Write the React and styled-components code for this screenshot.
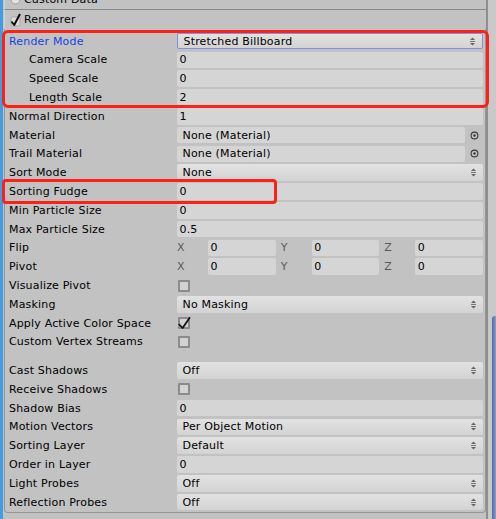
import React from 'react';
import styled, { createGlobalStyle } from 'styled-components';

const Global = createGlobalStyle`
  html, body { margin: 0; padding: 0; background: #c2c2c2; }
  body {
    font-family: "DejaVu Sans", Verdana, sans-serif;
    font-size: 11px;
    letter-spacing: 0.18px;
    color: #000;
    overflow: hidden;
  }
`;

const Page = styled.div`
  position: relative;
  width: 496px;
  height: 519px;
  display: flex;
  overflow: hidden;
  background: #c2c2c2;
`;

const EdgeStrip = styled.div`
  flex: none;
  width: 3px;
  background: #3f9de6;
`;

const Inspector = styled.div`
  flex: none;
  width: 483px;
  display: flex;
  flex-direction: column;
`;

const ScrollTrack = styled.div`
  flex: 1;
  display: flex;
  flex-direction: column;
  border-left: 2px solid #8e8e8e;
  background: #c9c9c9;
  padding: 316px 0 0 4px;
`;

const ScrollThumb = styled.div`
  flex: 1;
  background: linear-gradient(90deg, #4f68a3, #8e9dc6);
  border-radius: 3px 0 0 0;
`;

const Header = styled.div`
  box-sizing: border-box;
  flex: none;
  height: ${p => p.$h}px;
  margin: ${p => p.$mt}px 0 0 1px;
  padding-left: 5px;
  display: flex;
  align-items: center;
  gap: 3px;
  border-bottom: ${p => (p.$line ? '1px solid #8a8a8a' : 'none')};
  border-left: 1px solid #d4d4d4;
`;

const HeaderTitle = styled.span`
  line-height: 13px;
  white-space: nowrap;
`;

const Body = styled.div`
  flex: none;
  margin-left: 1px;
  padding-top: 2.8px;
  border: 1px solid #969696;
  border-top: none;
  border-radius: 0 0 4px 4px;
  display: flex;
  flex-direction: column;
`;

const Row = styled.div`
  box-sizing: border-box;
  height: 18.8px;
  display: flex;
  align-items: center;
  padding-right: 2px;
`;

const Spacer = styled.div`
  height: 9.8px;
`;

const Label = styled.div`
  flex: none;
  box-sizing: border-box;
  width: 172px;
  padding-left: ${p => (p.$indent ? 24 : 4)}px;
  color: ${p => (p.$active ? '#1742e2' : '#000')};
  white-space: nowrap;
  line-height: 13px;
`;

const Control = styled.div`
  flex: 1;
  min-width: 0;
  height: 16.6px;
  display: flex;
  align-items: center;
`;

const NumberField = styled.div`
  box-sizing: border-box;
  flex: 1;
  height: 16.6px;
  display: flex;
  align-items: center;
  padding-left: 2.5px;
  background: #d5d5d5;
  border-radius: 2px;
  line-height: 13px;
`;

const Dropdown = styled.div`
  box-sizing: border-box;
  flex: 1;
  height: 16.6px;
  display: flex;
  align-items: center;
  justify-content: space-between;
  padding: 0 6px 0 5.5px;
  background: linear-gradient(#e2e2e2, #d3d3d3);
  border: ${p => (p.$focus ? '1px solid #7d92e0' : 'none')};
  border-radius: 2px;
  line-height: 13px;
`;

const ObjectField = styled.div`
  box-sizing: border-box;
  flex: 1;
  height: 16.6px;
  display: flex;
  align-items: center;
  padding-left: 5.5px;
  background: #d5d5d5;
  border-radius: 2px;
  line-height: 13px;
`;

const PickerSlot = styled.div`
  flex: none;
  width: 17px;
  display: flex;
  justify-content: center;
  padding-left: 1px;
`;

const VectorGroup = styled.div`
  flex: 1;
  display: flex;
  align-items: center;
  gap: 5px;
`;

const Axis = styled.div`
  display: flex;
  flex: 1;
  align-items: center;
`;

const AxisLabel = styled.span`
  flex: none;
  width: 31px;
  color: #5a5a5a;
  line-height: 13px;
`;

const CheckBox = styled.div`
  position: relative;
  box-sizing: border-box;
  width: 12px;
  height: 12px;
  margin-left: 1px;
  border: 2px solid #8b8b8b;
  background: #d3d3d3;
  border-radius: 1px;
`;

const CheckMark = styled.svg`
  position: absolute;
  left: -2px;
  top: -3px;
`;

const Annotation = styled.div`
  position: absolute;
  box-sizing: border-box;
  left: ${p => p.$x}px;
  top: ${p => p.$y}px;
  width: ${p => p.$w}px;
  height: ${p => p.$h}px;
  border: 3px solid #ff2118;
  border-radius: ${p => p.$r}px;
  pointer-events: none;
`;

const Arrows = () => (
  <svg width="7" height="9" viewBox="0 0 7 9">
    <polygon points="1,3 3.5,0.5 6,3" fill="#666" />
    <rect x="1" y="4" width="5" height="1" fill="#777" />
    <polygon points="1,6 6,6 3.5,8.5" fill="#666" />
  </svg>
);

const Picker = () => (
  <svg width="9" height="9" viewBox="0 0 9 9">
    <circle cx="4.5" cy="4.5" r="3.4" fill="none" stroke="#3a3a3a" strokeWidth="1.1" />
    <circle cx="4.5" cy="4.5" r="1.2" fill="#3a3a3a" />
  </svg>
);

const Check = () => (
  <CheckMark width="13" height="14" viewBox="0 0 13 14">
    <path d="M0.8 8 L4.6 12 L12 1.2" fill="none" stroke="#111" strokeWidth="1.8" strokeLinejoin="round" />
  </CheckMark>
);

const HeaderToggle = () => (
  <svg width="11" height="14" viewBox="0 0 11 14" style={{ flex: 'none' }}>
    <rect x="1" y="4" width="9" height="9" rx="1.5" fill="#dcdcdc" stroke="#a5a5a5" />
    <path d="M1.5 8.5 L4.2 12 L10 1" fill="none" stroke="#0d0d0d" strokeWidth="2" strokeLinejoin="round" />
  </svg>
);

const HeaderRadio = () => (
  <svg width="11" height="11" viewBox="0 0 11 11" style={{ flex: 'none' }}>
    <circle cx="5.5" cy="5.5" r="4.5" fill="#e2e2e2" stroke="#a0a0a0" />
  </svg>
);

const rows = [
  { label: 'Render Mode', kind: 'drop', value: 'Stretched Billboard', active: true, focus: true },
  { label: 'Camera Scale', kind: 'num', value: '0', indent: true },
  { label: 'Speed Scale', kind: 'num', value: '0', indent: true },
  { label: 'Length Scale', kind: 'num', value: '2', indent: true },
  { label: 'Normal Direction', kind: 'num', value: '1' },
  { label: 'Material', kind: 'obj', value: 'None (Material)' },
  { label: 'Trail Material', kind: 'obj', value: 'None (Material)' },
  { label: 'Sort Mode', kind: 'drop', value: 'None' },
  { label: 'Sorting Fudge', kind: 'num', value: '0' },
  { label: 'Min Particle Size', kind: 'num', value: '0' },
  { label: 'Max Particle Size', kind: 'num', value: '0.5' },
  { label: 'Flip', kind: 'vec' },
  { label: 'Pivot', kind: 'vec' },
  { label: 'Visualize Pivot', kind: 'check' },
  { label: 'Masking', kind: 'drop', value: 'No Masking' },
  { label: 'Apply Active Color Space', kind: 'check', checked: true },
  { label: 'Custom Vertex Streams', kind: 'check' },
  { spacer: true },
  { label: 'Cast Shadows', kind: 'drop', value: 'Off' },
  { label: 'Receive Shadows', kind: 'check' },
  { label: 'Shadow Bias', kind: 'num', value: '0' },
  { label: 'Motion Vectors', kind: 'drop', value: 'Per Object Motion' },
  { label: 'Sorting Layer', kind: 'drop', value: 'Default' },
  { label: 'Order in Layer', kind: 'num', value: '0' },
  { label: 'Light Probes', kind: 'drop', value: 'Off' },
  { label: 'Reflection Probes', kind: 'drop', value: 'Off' },
];

const renderControl = r => {
  switch (r.kind) {
    case 'num':
      return <NumberField>{r.value}</NumberField>;
    case 'drop':
      return (
        <Dropdown $focus={r.focus}>
          <span>{r.value}</span>
          <Arrows />
        </Dropdown>
      );
    case 'obj':
      return (
        <>
          <ObjectField>{r.value}</ObjectField>
          <PickerSlot><Picker /></PickerSlot>
        </>
      );
    case 'vec':
      return (
        <VectorGroup>
          {['X', 'Y', 'Z'].map(a => (
            <Axis key={a}>
              <AxisLabel>{a}</AxisLabel>
              <NumberField>0</NumberField>
            </Axis>
          ))}
        </VectorGroup>
      );
    case 'check':
      return <CheckBox>{r.checked && <Check />}</CheckBox>;
    default:
      return null;
  }
};

export default function App() {
  return (
    <Page>
      <Global />
      <EdgeStrip />
      <Inspector>
        <Header $h={20} $mt={-10} $line>
          <HeaderRadio />
          <HeaderTitle>Custom Data</HeaderTitle>
        </Header>
        <Header $h={19} $mt={0}>
          <HeaderToggle />
          <HeaderTitle>Renderer</HeaderTitle>
        </Header>
        <Body>
          {rows.map((r, i) =>
            r.spacer ? (
              <Spacer key={i} />
            ) : (
              <Row key={i}>
                <Label $indent={r.indent} $active={r.active}>{r.label}</Label>
                <Control>{renderControl(r)}</Control>
              </Row>
            )
          )}
        </Body>
      </Inspector>
      <ScrollTrack>
        <ScrollThumb />
      </ScrollTrack>
      <Annotation $x={2} $y={30} $w={487} $h={78} $r={6} />
      <Annotation $x={2} $y={179} $w={275} $h={25} $r={4} />
    </Page>
  );
}
